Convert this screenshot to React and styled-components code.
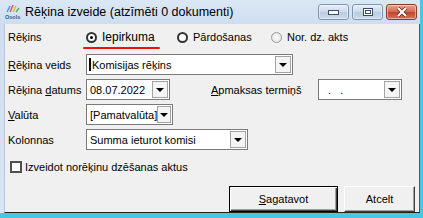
import React from "react";
import styled, { createGlobalStyle } from "styled-components";

const GlobalStyle = createGlobalStyle`
  html, body {
    margin: 0;
    padding: 0;
    width: 423px;
    height: 218px;
    overflow: hidden;
    background: #47c6e6;
  }
`;

const Window = styled.div`
  width: 423px;
  height: 218px;
  display: flex;
  flex-direction: column;
  background: linear-gradient(#dbe7f4, #cfdeef 24px, #d9e5f2);
  box-sizing: border-box;
  border-right: 3px solid #47c6e6;
  border-bottom: 5px solid #47c6e6;
  font-family: "Liberation Sans", Arial, sans-serif;
  font-size: 11px;
  color: #000;
`;

const TitleBar = styled.div`
  height: 23px;
  display: flex;
  align-items: center;
  padding-left: 4px;
  flex-shrink: 0;
`;

const TitleText = styled.span`
  font-size: 12.5px;
  margin-left: 4px;
  margin-top: 1px;
`;

const Controls = styled.div`
  margin-left: auto;
  display: flex;
  gap: 3px;
  margin-right: 3px;
  margin-top: 1px;
`;

const CtrlButton = styled.div`
  width: 31px;
  height: 16px;
  border: 1px solid ${(p) => (p.$close ? "#8a3a2d" : "#7f93ad")};
  border-radius: 3px;
  box-sizing: border-box;
  display: flex;
  align-items: center;
  justify-content: center;
  background: ${(p) =>
    p.$close
      ? "linear-gradient(#e8a393, #d4674f 50%, #c4432c 51%, #d27257)"
      : "linear-gradient(#e6eef8, #cbd9ea 50%, #b9cbe1 51%, #cddbec)"};
  box-shadow: inset 0 0 0 1px rgba(255, 255, 255, 0.45);
`;

const Body = styled.div`
  flex: 1;
  margin: 1px 0 0 4px;
  background: #f0f0f0;
  border-left: 1px solid #b7c6d8;
  border-right: 1px solid #555;
  border-bottom: 1px solid #222;
  display: flex;
  flex-direction: column;
  padding: 5px 0 0 3px;
  position: relative;
`;

const Row = styled.div`
  display: flex;
  align-items: center;
  height: ${(p) => p.$h || 21}px;
  margin-bottom: ${(p) => p.$mb ?? 4}px;
  position: relative;
`;

const Label = styled.span`
  width: ${(p) => p.$w || 78}px;
  flex-shrink: 0;
  white-space: nowrap;
`;

const RadioItem = styled.label`
  display: flex;
  align-items: center;
  width: ${(p) => p.$w}px;
  gap: 5px;
  font-size: ${(p) => (p.$big ? 12 : 11)}px;
`;

const RadioCircle = styled.span`
  width: 11px;
  height: 11px;
  border-radius: 50%;
  box-sizing: border-box;
  border: ${(p) => (p.$light ? "1px solid #9a9a9a" : "2px solid #333")};
  background: ${(p) => (p.$light ? "radial-gradient(#fff, #dcdcdc)" : "#fff")};
  display: flex;
  align-items: center;
  justify-content: center;
  &::after {
    content: "";
    width: 3px;
    height: 3px;
    border-radius: 50%;
    background: ${(p) => (p.$checked ? "#000" : "transparent")};
  }
`;

const RedLine = styled.div`
  position: absolute;
  left: 75px;
  top: 18px;
  width: 77px;
  height: 2px;
  background: #f01010;
  border-radius: 1px;
`;

const Combo = styled.div`
  width: ${(p) => p.$w}px;
  height: ${(p) => p.$h || 21}px;
  box-sizing: border-box;
  border: 1px solid #7a7a7a;
  background: #fff;
  display: flex;
  align-items: center;
  padding-left: 3px;
  flex-shrink: 0;
  white-space: nowrap;
  overflow: hidden;
`;

const Caret = styled.span`
  width: 2px;
  height: 13px;
  background: #000;
  margin-right: 1px;
  margin-left: -1px;
`;

const DropButton = styled.span`
  margin-left: auto;
  width: 16px;
  height: 17px;
  box-sizing: border-box;
  border: 1px solid #a3a3a3;
  background: #f4f4f4;
  margin-right: 1px;
  display: flex;
  align-items: center;
  justify-content: center;
  &::after {
    content: "";
    border-left: 4px solid transparent;
    border-right: 4px solid transparent;
    border-top: 4px solid #000;
    margin-top: 1px;
  }
`;

const CheckRow = styled.label`
  display: flex;
  align-items: center;
  gap: 2px;
  margin-left: 2px;
  margin-top: 7px;
`;

const CheckBox = styled.span`
  width: 12px;
  height: 12px;
  box-sizing: border-box;
  border: 2px solid #505050;
  background: #fff;
  margin-right: 1px;
`;

const ButtonRow = styled.div`
  margin-top: auto;
  display: flex;
  justify-content: flex-end;
  gap: 6px;
  padding-right: 4px;
  margin-bottom: 0;
`;

const Button = styled.button`
  width: ${(p) => p.$w}px;
  height: 26px;
  font-family: inherit;
  font-size: 11px;
  color: #000;
  background: #f0f0f0;
  box-sizing: border-box;
  border: 1px solid ${(p) => (p.$default ? "#000" : "#fff")};
  ${(p) => !p.$default && "border-right-color: #404040; border-bottom-color: #404040;"}
  box-shadow: ${(p) =>
    p.$default
      ? "inset 1px 1px 0 #fff, inset -1px -1px 0 #404040, inset -2px -2px 0 #a0a0a0"
      : "inset -1px -1px 0 #a0a0a0"};
  padding: 0;
`;

function AppIcon() {
  return (
    <svg width="17" height="17" viewBox="0 0 17 17">
      <path d="M3 9 L6 3" stroke="#3a9ad9" strokeWidth="1.4" />
      <path d="M6 9 L9 2" stroke="#e05050" strokeWidth="1.4" />
      <path d="M9 9 L12 3" stroke="#f0b020" strokeWidth="1.4" />
      <path d="M12 9 L15 5" stroke="#50b050" strokeWidth="1.4" />
      <text x="1" y="15.5" fontSize="5.5" fontFamily="Liberation Sans, sans-serif" fill="#2a5a8a" fontWeight="bold">
        Osols
      </text>
    </svg>
  );
}

function DropCombo({ w, children, caret }) {
  return (
    <Combo $w={w}>
      {caret && <Caret />}
      <span>{children}</span>
      <DropButton />
    </Combo>
  );
}

export default function App() {
  return (
    <>
      <GlobalStyle />
      <Window>
        <TitleBar>
          <AppIcon />
          <TitleText>Rēķina izveide (atzīmēti 0 dokumenti)</TitleText>
          <Controls>
            <CtrlButton>
              <svg width="11" height="5" viewBox="0 0 11 5">
                <rect x="0.5" y="0.5" width="10" height="4" fill="#fff" stroke="#3a4f6b" />
              </svg>
            </CtrlButton>
            <CtrlButton>
              <svg width="10" height="8" viewBox="0 0 10 8">
                <rect x="0.5" y="0.5" width="9" height="7" fill="#fff" stroke="#3a4f6b" />
                <rect x="2.5" y="2.5" width="5" height="3" fill="none" stroke="#3a4f6b" />
              </svg>
            </CtrlButton>
            <CtrlButton $close>
              <svg width="12" height="10" viewBox="0 0 12 10">
                <path d="M2 1 L10 9 M10 1 L2 9" stroke="#5a1a10" strokeWidth="3.4" />
                <path d="M2 1 L10 9 M10 1 L2 9" stroke="#fff" strokeWidth="2.2" />
              </svg>
            </CtrlButton>
          </Controls>
        </TitleBar>
        <Body>
          <Row $h={16} $mb={9}>
            <Label>Rēķins</Label>
            <RadioItem $w={91} $big>
              <RadioCircle $checked />
              Iepirkuma
            </RadioItem>
            <RadioItem $w={94}>
              <RadioCircle />
              Pārdošanas
            </RadioItem>
            <RadioItem $w={120}>
              <RadioCircle $light />
              Nor. dz. akts
            </RadioItem>
            <RedLine />
          </Row>
          <Row>
            <Label>
              <u>R</u>ēķina veids
            </Label>
            <DropCombo w={207} caret>
              Komisijas rēķins
            </DropCombo>
          </Row>
          <Row>
            <Label>
              Rēķina <u>d</u>atums
            </Label>
            <DropCombo w={84}>08.07.2022</DropCombo>
            <Label $w={107} style={{ marginLeft: 41 }}>
              <u>A</u>pmaksas termiņš
            </Label>
            <DropCombo w={84}>&nbsp;&nbsp;.&nbsp;&nbsp;&nbsp;.</DropCombo>
          </Row>
          <Row>
            <Label>
              <u>V</u>alūta
            </Label>
            <DropCombo w={87}>[Pamatvalūta]</DropCombo>
          </Row>
          <Row>
            <Label>Kolonnas</Label>
            <DropCombo w={162}>Summa ieturot komisi</DropCombo>
          </Row>
          <CheckRow>
            <CheckBox />
            Izveidot norēķinu dzēšanas aktus
          </CheckRow>
          <ButtonRow>
            <Button $w={109} $default>
              <u>S</u>agatavot
            </Button>
            <Button $w={71}>Atcelt</Button>
          </ButtonRow>
        </Body>
      </Window>
    </>
  );
}
